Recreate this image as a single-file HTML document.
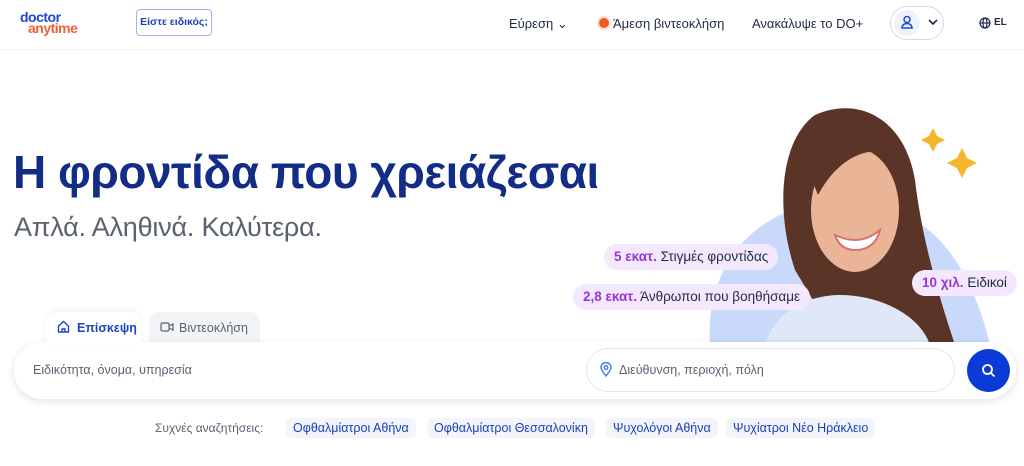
<!DOCTYPE html>
<html><head><meta charset="utf-8"><style>
*{margin:0;padding:0;box-sizing:border-box}
body{width:1024px;height:466px;overflow:hidden;background:#fff;font-family:"Liberation Sans","DejaVu Sans",sans-serif;position:relative;color:#1d2939}
.a{position:absolute}
.nav{font-size:13px;color:#1f2a44;top:16px}
.pill{position:absolute;background:#f3e8fd;border-radius:13px;height:26px;font-size:13.5px;color:#1f2a44;padding:0 10px;line-height:26px;white-space:nowrap}
.pill b{color:#9b35d8}
.chip{position:absolute;top:418px;height:20px;background:#f2f5fa;border-radius:5px;font-size:12.5px;color:#1b3fbf;line-height:20px;padding:0 7px;white-space:nowrap}
</style></head><body>
<div class="a" style="left:20px;top:12px;font-size:14px;font-weight:bold;line-height:11px;letter-spacing:-0.5px">
<div style="color:#1e46d8">doctor</div><div style="color:#f0603a;padding-left:8px">anytime</div></div>
<div class="a" style="left:136px;top:9px;width:76px;height:27px;border:1px solid #9fb3ee;border-radius:4px;font-size:10.5px;color:#1f3fb8;font-weight:bold;text-align:center;line-height:25px">Είστε ειδικός;</div>
<div class="a nav" style="left:509px">Εύρεση ⌄</div>
<div class="a" style="left:599px;top:18px;width:10px;height:10px;border-radius:50%;background:#f05a24;box-shadow:0 0 0 2px #fde0d5"></div>
<div class="a nav" style="left:613px">Άμεση βιντεοκλήση</div>
<div class="a nav" style="left:752px">Ανακάλυψε το DO+</div>
<div class="a" style="left:890px;top:6px;width:54px;height:34px;border:1px solid #d5d9e2;border-radius:17px"></div>
<div class="a" style="left:894px;top:10px;width:26px;height:26px;border-radius:50%;background:#eef2fb"></div>
<svg class="a" style="left:900px;top:15px" width="14" height="14" viewBox="0 0 14 14" fill="none" stroke="#1e46d8" stroke-width="1.5"><circle cx="7" cy="4.5" r="3"/><path d="M2 13c0-3 2.5-4.5 5-4.5s5 1.5 5 4.5z"/></svg>
<svg class="a" style="left:928px;top:18px" width="10" height="8" viewBox="0 0 10 8" fill="none" stroke="#1f2a44" stroke-width="1.6"><path d="M1 2l4 4 4-4"/></svg>
<svg class="a" style="left:979px;top:17px" width="12" height="12" viewBox="0 0 12 12" fill="none" stroke="#1f2a44" stroke-width="1.2"><circle cx="6" cy="6" r="5"/><ellipse cx="6" cy="6" rx="2" ry="5"/><path d="M1 6h10"/></svg>
<div class="a" style="left:994px;top:17px;font-size:10px;font-weight:bold;color:#1f2a44">EL</div>
<div class="a" style="left:0;top:49px;width:1024px;height:1px;background:#eef0f3"></div>

<div class="a" style="left:13px;top:145px;font-size:46px;font-weight:bold;color:#132c85;letter-spacing:-0.5px;white-space:nowrap">Η φροντίδα που χρειάζεσαι</div>
<div class="a" style="left:14px;top:212px;font-size:27px;color:#5a6270;letter-spacing:-0.2px;white-space:nowrap">Απλά. Αληθινά. Καλύτερα.</div>

<svg class="a" style="left:690px;top:100px" width="334" height="245" viewBox="0 0 334 245">
<path d="M20 245C15 180 50 120 120 105 200 90 270 120 300 245z" fill="#c9d9fc"/>
<path d="M105 170C85 110 90 40 125 15 170 -5 215 20 225 80 232 140 250 200 265 245H150z" fill="#5a3426"/>
<path d="M75 245C85 210 120 195 150 195 190 195 230 215 240 245z" fill="#dfe8f8"/>
<ellipse cx="165" cy="110" rx="44" ry="62" fill="#e9b596"/>
<path d="M120 75C130 35 185 25 212 60 195 45 155 45 128 95z" fill="#5a3426"/>
<path d="M145 135q25 12 45 -5q-5 20-25 20q-15 0-20-15z" fill="#fff" stroke="#d9706e" stroke-width="2"/>
<path d="M243 28l4 8 8 4-8 4-4 8-4-8-8-4 8-4z" fill="#f7b52a"/>
<path d="M272 48l5 10 10 5-10 5-5 10-5-10-10-5 10-5z" fill="#f7b52a"/>
</svg>
<div class="pill" style="left:604px;top:244px"><b>5 εκατ.</b> Στιγμές φροντίδας</div>
<div class="pill" style="left:573px;top:284px"><b>2,8 εκατ.</b> Άνθρωποι που βοηθήσαμε</div>
<div class="pill" style="left:912px;top:270px"><b>10 χιλ.</b> Ειδικοί</div>

<div class="a" style="left:149px;top:312px;width:111px;height:32px;background:#f2f4f7;border-radius:10px 10px 0 0;font-size:12.5px;color:#5a6270;padding:9px 0 0 30px">Βιντεοκλήση</div>
<svg class="a" style="left:160px;top:321px" width="14" height="12" viewBox="0 0 14 12" fill="none" stroke="#5a6270" stroke-width="1.2"><rect x="1" y="2" width="8" height="8" rx="1.5"/><path d="M9 5l4-2v6l-4-2"/></svg>
<div class="a" style="left:14px;top:342px;width:1002px;height:57px;background:#fff;border-radius:28px;box-shadow:0 2px 8px rgba(0,0,0,.12)"></div>
<div class="a" style="left:46px;top:312px;width:95px;height:34px;background:#fff;border-radius:10px 10px 0 0;box-shadow:0 -2px 5px rgba(0,0,0,.05);font-size:12.5px;font-weight:bold;color:#1e46c8;padding:9px 0 0 31px">Επίσκεψη</div>
<svg class="a" style="left:57px;top:320px" width="13" height="13" viewBox="0 0 13 13" fill="none" stroke="#1e46c8" stroke-width="1.4"><path d="M1.5 6L6.5 1.5 11.5 6V12H1.5z"/><path d="M5 12V9h3v3"/></svg>
<div class="a" style="left:33px;top:363px;font-size:12.5px;color:#5a6270">Ειδικότητα, όνομα, υπηρεσία</div>
<div class="a" style="left:586px;top:348px;width:369px;height:44px;border:1px solid #e3e6ec;border-radius:22px"></div>
<svg class="a" style="left:600px;top:362px" width="12" height="15" viewBox="0 0 12 15" fill="none" stroke="#3b7bf0" stroke-width="1.4"><path d="M6 14C2 9 1 7 1 5.5a5 5 0 0110 0C11 7 10 9 6 14z"/><circle cx="6" cy="5.5" r="1.8"/></svg>
<div class="a" style="left:619px;top:363px;font-size:12.5px;color:#5a6270">Διεύθυνση, περιοχή, πόλη</div>
<div class="a" style="left:967px;top:349px;width:43px;height:43px;border-radius:50%;background:#0b3ad6"></div>
<svg class="a" style="left:981px;top:363px" width="15" height="15" viewBox="0 0 15 15" fill="none" stroke="#fff" stroke-width="1.8"><circle cx="6.5" cy="6.5" r="4.5"/><path d="M10 10l3.5 3.5"/></svg>

<div class="a" style="left:155px;top:421px;font-size:12px;color:#5a6270">Συχνές αναζητήσεις:</div>
<div class="chip" style="left:286px">Οφθαλμίατροι Αθήνα</div>
<div class="chip" style="left:427px">Οφθαλμίατροι Θεσσαλονίκη</div>
<div class="chip" style="left:606px">Ψυχολόγοι Αθήνα</div>
<div class="chip" style="left:726px">Ψυχίατροι Νέο Ηράκλειο</div>
</body></html>
